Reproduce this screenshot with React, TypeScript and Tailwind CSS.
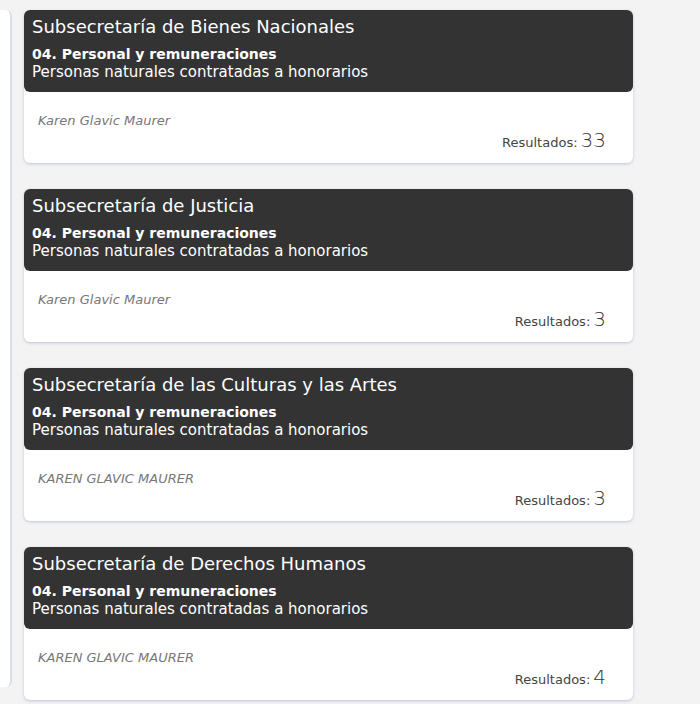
import React from 'react'

type Item = {
  title: string
  name: string
  count: number
}

const items: Item[] = [
  { title: 'Subsecretaría de Bienes Nacionales', name: 'Karen Glavic Maurer', count: 33 },
  { title: 'Subsecretaría de Justicia', name: 'Karen Glavic Maurer', count: 3 },
  { title: 'Subsecretaría de las Culturas y las Artes', name: 'KAREN GLAVIC MAURER', count: 3 },
  { title: 'Subsecretaría de Derechos Humanos', name: 'KAREN GLAVIC MAURER', count: 4 },
]

function ResultCard({ item }: { item: Item }) {
  return (
    <div className="w-[609px] rounded-md bg-white shadow-[0_1px_3px_rgba(120,140,180,0.45)]">
      <div className="rounded-md bg-[#333333] px-2 pt-[5px] pb-[11px] text-white">
        <div className="text-[18px] leading-[24px]">{item.title}</div>
        <div className="mt-[6px] text-[14px] font-bold leading-[18px]">04. Personal y remuneraciones</div>
        <div className="text-[15px] leading-[18px]">Personas naturales contratadas a honorarios</div>
      </div>
      <div className="pl-[14px] pr-[27px] pt-[20px] pb-[11px]">
        <div className="text-[13px] italic leading-[18px] text-[#777777]">{item.name}</div>
        <div className="flex h-[22px] items-baseline justify-end gap-[3px] text-[#444444]">
          <span className="text-[13px] leading-[20px]">Resultados:</span>
          <span className="text-[20px] font-light leading-[20px] text-[#333333]">{item.count}</span>
        </div>
      </div>
    </div>
  )
}

export default function App() {
  return (
    <div
      className="h-[704px] overflow-hidden bg-[#f3f3f3] pt-[10px]"
      style={{ fontFamily: '"DejaVu Sans", sans-serif' }}
    >
      <div className="flex items-start">
        <div className="h-[677px] w-[12px] rounded-r-md border-r-2 border-[#d9dee6] bg-white" />
        <div className="ml-[12px] flex flex-col gap-[26px]">
          {items.map((item) => (
            <ResultCard key={item.title} item={item} />
          ))}
        </div>
      </div>
    </div>
  )
}
